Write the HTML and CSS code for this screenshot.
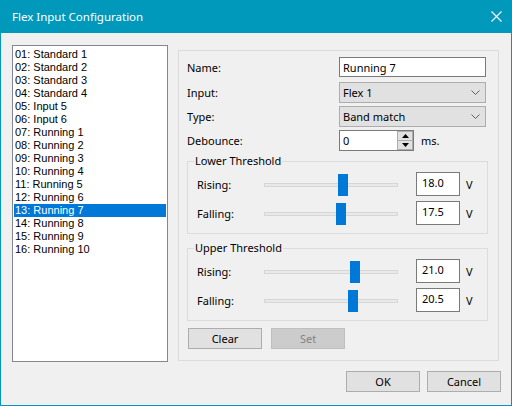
FILE: index.html
```html
<!DOCTYPE html>
<html lang="en">
<head>
<meta name="viewport" content="width=device-width, initial-scale=1.0">
  <title>Flex Input Configuration</title>
  <link rel="stylesheet" href="styles.css">
</head>
<body>

  <div class="ventana">
    <div class="titulo">
      <span>Flex Input Configuration</span>
      <svg class="cerrar" width="11" height="11" viewBox="0 0 11 11">
        <path d="M0.5 0.5 L10.5 10.5 M10.5 0.5 L0.5 10.5" stroke="#ffffff" stroke-width="1.1" fill="none"/>
      </svg>
    </div>

    <div class="cuerpo">
      <div class="principal">
        <ul class="lista">
          <li>01: Standard 1</li>
          <li>02: Standard 2</li>
          <li>03: Standard 3</li>
          <li>04: Standard 4</li>
          <li>05: Input 5</li>
          <li>06: Input 6</li>
          <li>07: Running 1</li>
          <li>08: Running 2</li>
          <li>09: Running 3</li>
          <li>10: Running 4</li>
          <li>11: Running 5</li>
          <li>12: Running 6</li>
          <li class="activo">13: Running 7</li>
          <li>14: Running 8</li>
          <li>15: Running 9</li>
          <li>16: Running 10</li>
        </ul>

        <div class="panel">
          <div class="fila fila-nombre">
            <span class="etiqueta">Name:</span>
            <div class="caja texto">Running 7</div>
          </div>
          <div class="fila fila-combo">
            <span class="etiqueta">Input:</span>
            <div class="caja combo">
              <span>Flex 1</span>
              <svg width="9" height="5" viewBox="0 0 9 5"><path d="M0.5 0.5 L4.5 4.5 L8.5 0.5" stroke="#606060" fill="none"/></svg>
            </div>
          </div>
          <div class="fila fila-combo">
            <span class="etiqueta">Type:</span>
            <div class="caja combo">
              <span>Band match</span>
              <svg width="9" height="5" viewBox="0 0 9 5"><path d="M0.5 0.5 L4.5 4.5 L8.5 0.5" stroke="#606060" fill="none"/></svg>
            </div>
          </div>
          <div class="fila fila-combo">
            <span class="etiqueta">Debounce:</span>
            <div class="caja spinner">
              <span class="spinner-valor">0</span>
              <div class="flechas">
                <div class="flecha"><svg width="7" height="4" viewBox="0 0 7 4"><path d="M3.5 0 L7 4 L0 4 Z" fill="#000"/></svg></div>
                <div class="flecha"><svg width="7" height="4" viewBox="0 0 7 4"><path d="M0 0 L7 0 L3.5 4 Z" fill="#000"/></svg></div>
              </div>
            </div>
            <span class="unidad-ms">ms.</span>
          </div>

          <fieldset class="grupo">
            <legend>Lower Threshold</legend>
            <div class="umbral">
              <span class="etiqueta-umbral">Rising:</span>
              <div class="slider"><div class="pista"></div><div class="pulgar" style="left: 74px"></div></div>
              <div class="valor">18.0</div>
              <span class="unidad">V</span>
            </div>
            <div class="umbral">
              <span class="etiqueta-umbral">Falling:</span>
              <div class="slider"><div class="pista"></div><div class="pulgar" style="left: 72px"></div></div>
              <div class="valor">17.5</div>
              <span class="unidad">V</span>
            </div>
          </fieldset>

          <fieldset class="grupo grupo-superior">
            <legend>Upper Threshold</legend>
            <div class="umbral">
              <span class="etiqueta-umbral">Rising:</span>
              <div class="slider"><div class="pista"></div><div class="pulgar" style="left: 86px"></div></div>
              <div class="valor">21.0</div>
              <span class="unidad">V</span>
            </div>
            <div class="umbral">
              <span class="etiqueta-umbral">Falling:</span>
              <div class="slider"><div class="pista"></div><div class="pulgar" style="left: 84px"></div></div>
              <div class="valor">20.5</div>
              <span class="unidad">V</span>
            </div>
          </fieldset>

          <div class="acciones">
            <button>Clear</button>
            <button disabled>Set</button>
          </div>
        </div>
      </div>

      <div class="pie">
        <button>OK</button>
        <button>Cancel</button>
      </div>
    </div>
  </div>

</body>
</html>
```

FILE: styles.css
```css
* {
  margin: 0;
  padding: 0;
  box-sizing: border-box;
}

body {
  width: 512px;
  height: 406px;
  background: #f0f0f0;
  font-family: "Noto Sans", "Open Sans", sans-serif;
  font-size: 11px;
  color: #000000;
}

.ventana {
  width: 512px;
  height: 406px;
  border: 1px solid #0099bc;
  background: #f0f0f0;
  display: flex;
  flex-direction: column;
}

.titulo {
  height: 32px;
  background: #0099bc;
  color: #ffffff;
  display: flex;
  align-items: center;
  justify-content: space-between;
  padding: 0 9px 1px 11px;
  font-size: 11.5px;
}

.cuerpo {
  flex: 1;
  padding: 12px 0 0 11px;
}

.principal {
  display: flex;
  align-items: flex-start;
}

.lista {
  list-style: none;
  width: 156px;
  height: 317px;
  border: 1px solid #828790;
  background: #ffffff;
  padding: 2px 1px;
  overflow: hidden;
  font-family: "Liberation Sans", Arial, sans-serif;
  font-size: 11px;
}

.lista li {
  height: 13px;
  line-height: 13px;
  padding-left: 1px;
  white-space: nowrap;
}

.lista li.activo {
  background: #0078d7;
  color: #ffffff;
}

.panel {
  width: 321px;
  height: 311px;
  margin: 5px 0 0 10px;
  border: 1px solid #dcdcdc;
  padding: 6px 0 0 8px;
}

.fila {
  display: flex;
  align-items: center;
}

.fila-nombre { margin-bottom: 5px; }
.fila-combo { margin-bottom: 3px; }

.etiqueta {
  width: 152px;
}

.caja {
  width: 147px;
  height: 21px;
  padding-left: 3px;
  display: flex;
  align-items: center;
}

.texto {
  height: 20px;
  background: #ffffff;
  border: 1px solid #7a7a7a;
}

.combo {
  background: #e1e1e1;
  border: 1px solid #adadad;
  justify-content: space-between;
  padding-right: 5px;
}

.spinner {
  width: 75px;
  background: #ffffff;
  border: 1px solid #7a7a7a;
  padding-right: 0;
  justify-content: space-between;
  align-items: stretch;
}

.spinner-valor {
  display: flex;
  align-items: center;
}

.flechas {
  width: 16px;
  display: flex;
  flex-direction: column;
}

.flecha {
  flex: 1;
  background: #e1e1e1;
  border: 1px solid #adadad;
  display: flex;
  align-items: center;
  justify-content: center;
}

.flecha + .flecha { border-top: none; }

.unidad-ms {
  margin-left: 7px;
}

.grupo {
  width: 301px;
  margin-top: 3px;
  border: 1px solid #dcdcdc;
  padding: 4px 0 8px 6px;
}

.grupo-superior {
  margin-top: 7px;
}

.grupo legend {
  padding: 0 1px;
  line-height: 14px;
}

.umbral {
  display: flex;
  align-items: center;
  height: 24px;
  padding-left: 3px;
}

.umbral + .umbral {
  margin-top: 5px;
}

.etiqueta-umbral {
  width: 67px;
}

.slider {
  position: relative;
  width: 134px;
  height: 22px;
  margin-top: 2px;
  margin-right: 18px;
  display: flex;
  align-items: center;
}

.pista {
  width: 100%;
  height: 4px;
  background: #e7eaea;
  border: 1px solid #d6d6d6;
}

.pulgar {
  position: absolute;
  top: 0;
  width: 10px;
  height: 22px;
  background: #0078d7;
}

.valor {
  width: 44px;
  height: 24px;
  background: #ffffff;
  border: 1px solid #7a7a7a;
  padding-left: 5px;
  line-height: 20px;
}

.unidad {
  margin-left: 6px;
}

.acciones {
  margin: 7px 0 0 1px;
  display: flex;
  gap: 9px;
}

button {
  width: 74px;
  height: 21px;
  background: #e1e1e1;
  border: 1px solid #adadad;
  font-family: "Noto Sans", "Open Sans", sans-serif;
  font-size: 11px;
  color: #000000;
}

button:disabled {
  background: #cccccc;
  border-color: #bfbfbf;
  color: #838383;
}

.pie {
  margin-top: 9px;
  padding-right: 10px;
  display: flex;
  justify-content: flex-end;
  gap: 7px;
}
```
